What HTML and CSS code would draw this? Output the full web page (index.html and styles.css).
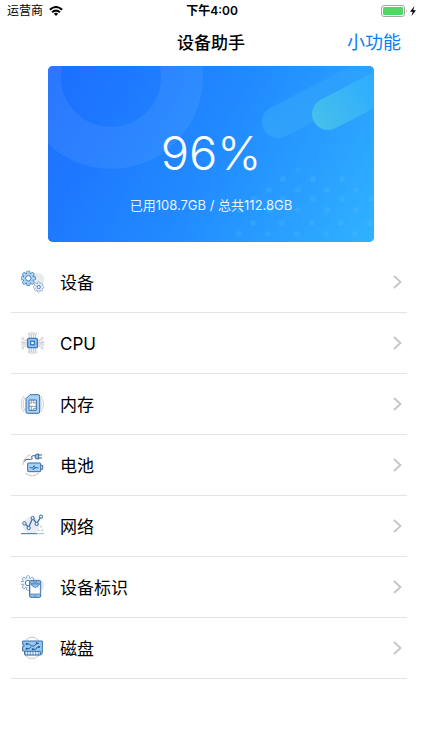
FILE: index.html
```html
<!DOCTYPE html>
<html lang="zh-CN">
<head>
<meta charset="utf-8">
<meta name="viewport" content="width=device-width, initial-scale=1">
<title>设备助手</title>
<link rel="stylesheet" href="styles.css">
</head>
<body>
<svg class="defs" aria-hidden="true">
  <defs>
    <g id="teeth">
      <rect x="-4" y="-21" width="8" height="42" rx="2"/>
      <rect x="-4" y="-21" width="8" height="42" rx="2" transform="rotate(45)"/>
      <rect x="-4" y="-21" width="8" height="42" rx="2" transform="rotate(90)"/>
      <rect x="-4" y="-21" width="8" height="42" rx="2" transform="rotate(135)"/>
    </g>
    <g id="gear">
      <use href="#teeth"/>
      <circle r="15"/>
      <use href="#teeth" stroke="none"/>
      <circle r="14" stroke="none"/>
    </g>
    <symbol id="chevron" viewBox="0 0 10 14"><path d="M1 1l6.500 6L1 13" fill="none" stroke="#c4c4c9" stroke-width="1.800"/></symbol>
  </defs>
</svg>

<header class="status">
  <div class="carrier">
    <span>运营商</span>
    <svg class="wifi" viewBox="0 0 14 10" aria-hidden="true">
      <g fill="none" stroke="#000" stroke-width="2"><path d="M.8 3.700Q7-1.700 13.200 3.700"/><path d="M3.100 6.300Q7 2.900 10.900 6.300"/></g>
      <path d="M4.900 7.700Q7 6 9.100 7.700L7 10z"/>
    </svg>
  </div>
  <time class="clock">下午4:00</time>
  <div class="power">
    <svg class="battery" viewBox="0 0 36 12" aria-hidden="true">
      <rect x=".5" y=".5" width="23" height="11" rx="2.500" fill="#fff" stroke="#a5a5a5"/>
      <rect x="2" y="2" width="20" height="8" rx="1" fill="#4cd964"/>
      <path d="M25 4q1.500 2 0 4z" fill="#a5a5a5"/>
      <path d="M33.500 1L29 6.700h2.800L30.500 11 35 5.300h-2.800z"/>
    </svg>
  </div>
</header>

<nav class="navbar">
  <h1 class="title">设备助手</h1>
  <button class="action" type="button">小功能</button>
</nav>

<main>
  <section class="card">
    <svg class="art" viewBox="0 0 326 176" preserveAspectRatio="xMidYMid slice" aria-hidden="true">
      <defs>
        <linearGradient id="bg" x1="0" y1="0" x2="326" y2="176" gradientUnits="userSpaceOnUse"><stop offset="0" stop-color="#1c6dff"/><stop offset=".5" stop-color="#218aff"/><stop offset="1" stop-color="#30b2ff"/></linearGradient>
        <linearGradient id="pill" x1="264" y1="56" x2="326" y2="22" gradientUnits="userSpaceOnUse"><stop offset="0" stop-color="#46c0ea"/><stop offset="1" stop-color="#30adff"/></linearGradient>
        <linearGradient id="pillSoft" x1="214" y1="64" x2="320" y2="8" gradientUnits="userSpaceOnUse"><stop offset="0" stop-color="#43b5f4" stop-opacity=".42"/><stop offset="1" stop-color="#43b5f4" stop-opacity=".12"/></linearGradient>
      </defs>
      <rect width="326" height="176" fill="url(#bg)"/>
      <circle cx="63" cy="11" r="71" fill="none" stroke="#fff" stroke-opacity=".065" stroke-width="42"/>
      <path d="M230 56L370-17" stroke="url(#pillSoft)" stroke-width="32" stroke-linecap="round"/>
      <path d="M280 48L400-14" stroke="url(#pill)" stroke-width="32" stroke-linecap="round"/>
      <g fill="none" stroke="#65c4ff" stroke-opacity=".2" stroke-width="6" stroke-linecap="round">
        <path d="M250 104h0" stroke-opacity=".1"/>
        <path d="M235 113h0M265 113h0M294 113h0"/>
        <path d="M221 124h0M250 124h0M279 124h0M308 124h0"/>
        <path d="M206 133h0M235 133h0M265 133h0M294 133h0M323 133h0"/>
        <path d="M192 144h0M221 144h0M250 144h0M279 144h0M308 144h0"/>
        <path d="M205 157h0M234 157h0M264 157h0M293 157h0M322 157h0"/>
        <path d="M191 168h0M220 168h0M249 168h0M278 168h0M307 168h0"/>
      </g>
    </svg>
    <p class="percent">96%</p>
    <p class="usage">已用108.7GB / 总共112.8GB</p>
  </section>

  <ul class="menu">
    <li><a class="row" href="#device">
      <svg class="icon" viewBox="0 0 72 72" aria-hidden="true">
        <circle cx="49" cy="28" r="20" fill="#e8ebee"/>
        <g fill="#a9d4f8" stroke="#4a7bb0" stroke-width="4"><use href="#gear" transform="translate(22 25)"/></g>
        <circle cx="22" cy="25" r="8" fill="#fff" stroke="#4a7bb0" stroke-width="3"/>
        <g fill="#e4f1fc" stroke="#4a7bb0" stroke-width="4"><use href="#gear" transform="translate(53 51) scale(.7)"/></g>
        <circle cx="53" cy="51" r="5" fill="#fff" stroke="#4a7bb0" stroke-width="3"/>
      </svg>
      <span class="label">设备</span><svg class="chevron" aria-hidden="true"><use href="#chevron"/></svg></a></li>
    <li><a class="row" href="#cpu">
      <svg class="icon" viewBox="0 0 72 72" aria-hidden="true">
        <g fill="none" stroke="#bfc1c6" stroke-width="3">
          <path d="M25 21V9M31 21V8M37 21V8M43 21V9M25 51v12M31 51v13M37 51v13M43 51v12M19 28h-8l-6-5M19 34H3M19 39H3M19 45h-8l-6 5M49 28h8l6-5M49 34h16M49 39h16M49 45h8l6 5"/>
          <g fill="#fff" stroke-width="2"><circle cx="24" cy="9" r="3"/><circle cx="31" cy="7" r="3"/><circle cx="38" cy="7" r="3"/><circle cx="45" cy="9" r="3"/><circle cx="24" cy="63" r="3"/><circle cx="31" cy="65" r="3"/><circle cx="38" cy="65" r="3"/><circle cx="45" cy="63" r="3"/><circle cx="5" cy="22" r="3"/><circle cx="4" cy="33" r="3"/><circle cx="4" cy="41" r="3"/><circle cx="5" cy="51" r="3"/><circle cx="64" cy="22" r="3"/><circle cx="66" cy="33" r="3"/><circle cx="66" cy="41" r="3"/><circle cx="64" cy="51" r="3"/></g>
        </g>
        <rect x="20" y="22" width="29" height="28" rx="3" fill="#8fc5f2" stroke="#3f7cc0" stroke-width="4"/>
        <rect x="29" y="31" width="11" height="10" fill="#fff" stroke="#3f7cc0" stroke-width="4"/>
      </svg>
      <span class="label">CPU</span><svg class="chevron" aria-hidden="true"><use href="#chevron"/></svg></a></li>
    <li><a class="row" href="#memory">
      <svg class="icon" viewBox="0 0 72 72" aria-hidden="true">
        <path d="M8 12Q-7 36 8 60M12 16Q0 36 12 56M60 12q15 24 0 48M55 16q12 20 0 40" fill="none" stroke="#cdd1d6" stroke-width="3"/>
        <path d="M27 8h25q4 0 4 4v48q0 4-4 4H19q-4 0-4-4V20z" fill="#a7d2f6" stroke="#3c6ea6" stroke-width="3"/>
        <path d="M24 24h22v31H24z" fill="#fff" stroke="#3c6ea6" stroke-width="3"/>
        <path d="M24 33h8v-9M38 24v9h8M24 43h22M31 55V43M38 55v-6h8" fill="none" stroke="#3c6ea6" stroke-width="2"/>
      </svg>
      <span class="label">内存</span><svg class="chevron" aria-hidden="true"><use href="#chevron"/></svg></a></li>
    <li><a class="row" href="#battery">
      <svg class="icon" viewBox="0 0 72 72" aria-hidden="true">
        <path d="M5 36Q9 11 28 5M13 60q21 17 41 0" fill="none" stroke="#bfc4ca" stroke-width="3"/>
        <path d="M11 26q0-7 7-7h11q9 0 3-6-2-5 6-5h7" fill="none" stroke="#365f8e" stroke-width="3"/>
        <path d="M53 3h-3q-8 0-8 8t8 7h3z" fill="#8fc5f2" stroke="#365f8e" stroke-width="3"/>
        <path d="M53 6h10M53 15h10" stroke="#365f8e" stroke-width="3"/>
        <rect x="20" y="30" width="39" height="26" rx="2" fill="#a4d1f7" stroke="#3c6ea6" stroke-width="3"/>
        <path d="M60 37h5v12h-5" fill="#a4d1f7" stroke="#3c6ea6" stroke-width="3"/>
        <path d="M26 44h8l6-6v6h12M36 44v6l8-6" fill="none" stroke="#3c6ea6" stroke-width="3"/>
      </svg>
      <span class="label">电池</span><svg class="chevron" aria-hidden="true"><use href="#chevron"/></svg></a></li>
    <li><a class="row" href="#network">
      <svg class="icon" viewBox="0 0 72 72" aria-hidden="true">
        <circle cx="31" cy="34" r="25" fill="#e9edf1"/>
        <path d="M10 28l13 12L35 12l12 17L60 8" fill="none" stroke="#3c6ea6" stroke-width="4"/>
        <g fill="#d6edff" stroke="#3c6ea6" stroke-width="3"><circle cx="10" cy="28" r="5"/><circle cx="23" cy="42" r="5"/><circle cx="35" cy="12" r="5"/><circle cx="47" cy="30" r="5"/><circle cx="60" cy="8" r="5"/></g>
        <path d="M0 59h50" stroke="#3c6ea6" stroke-width="3"/><path d="M52 59h17" stroke="#9bb7d5" stroke-width="3"/>
        <path d="M50 49h6M53 46v6M61 49h6M64 46v6M57 38h6M60 35v6" stroke="#b9bdc4" stroke-width="2"/>
      </svg>
      <span class="label">网络</span><svg class="chevron" aria-hidden="true"><use href="#chevron"/></svg></a></li>
    <li><a class="row" href="#identifier">
      <svg class="icon" viewBox="0 0 72 72" aria-hidden="true">
        <circle cx="49" cy="31" r="21" fill="#e8ebee"/>
        <g fill="#e4f1fc" stroke="#557fab" stroke-width="3"><use href="#gear" transform="translate(21 24)"/></g>
        <circle cx="21" cy="24" r="8" fill="#fff" stroke="#557fab" stroke-width="3"/>
        <rect x="26" y="17" width="33" height="50" rx="4" fill="#8fc5f2" stroke="#3c6ea6" stroke-width="3"/>
        <path d="M27 25h31v32H27z" fill="#fff" stroke="#3c6ea6" stroke-width="2"/>
        <path d="M30 27v3l5 1 1 5 4-1 3 4 3-4 4 1 1-5 4-1v-3z" fill="#8fc5f2" stroke="#3c6ea6" stroke-width="2"/>
        <path d="M37 21h11M40 62h6" stroke="#3c6ea6" stroke-width="2"/>
      </svg>
      <span class="label">设备标识</span><svg class="chevron" aria-hidden="true"><use href="#chevron"/></svg></a></li>
    <li><a class="row" href="#disk">
      <svg class="icon" viewBox="0 0 72 72" aria-hidden="true">
        <path d="M14 13Q32-7 53 13M13 58q20 20 41 0" fill="none" stroke="#c3c6cb" stroke-width="3"/>
        <path d="M7 15h57v35q0 6-6 6H11V45H5V31h4v-5H5V15z" fill="#92c9f7" stroke="#3c6ea6" stroke-width="3"/>
        <path d="M17 24h8l6 6h8l8-8h7M17 38h8l5-6M36 40h8l5-7h6" fill="none" stroke="#35608f" stroke-width="3"/>
        <g fill="#28527f"><circle cx="17" cy="24" r="3"/><circle cx="17" cy="38" r="3"/><circle cx="35" cy="40" r="3"/><circle cx="47" cy="22" r="3"/><circle cx="54" cy="33" r="3"/></g>
        <path d="M12 46h46v11H12z" fill="#e4f1fc" stroke="#3c6ea6" stroke-width="3"/>
        <path d="M20 46v11M28 46v11M36 46v11M44 46v11M52 46v11" stroke="#3c6ea6" stroke-width="2"/>
      </svg>
      <span class="label">磁盘</span><svg class="chevron" aria-hidden="true"><use href="#chevron"/></svg></a></li>
  </ul>
</main>
</body>
</html>
```
FILE: styles.css
```css
* {
  box-sizing: border-box;
}

body {
  margin: 0;
  background: #fff;
  color: #000;
  font-family: Inter, "Noto Sans CJK SC", sans-serif;
}

.defs {
  position: absolute;
  width: 0;
  height: 0;
}

.status,
.navbar {
  display: grid;
  grid-template-columns: 1fr auto 1fr;
  align-items: center;
}

.status {
  height: 22px;
  padding: 0 5px 0 7px;
  font-size: 12px;
  line-height: 22px;
}

.carrier {
  display: flex;
  align-items: center;
  gap: 6px;
}

.wifi {
  width: 14px;
  height: 10px;
}

.clock {
  font-weight: 600;
}

.power {
  display: flex;
  justify-content: flex-end;
}

.battery {
  width: 36px;
  height: 12px;
}

.navbar {
  height: 44px;
  padding: 0 21px 2px;
}

.title {
  grid-column: 2;
  margin: 0;
  font-size: 17px;
  font-weight: 500;
  line-height: 24px;
}

.action {
  justify-self: end;
  padding: 0;
  border: 0;
  background: none;
  color: #0a7cf5;
  font: inherit;
  font-size: 18px;
  line-height: 24px;
}

.card {
  position: relative;
  display: flex;
  flex-direction: column;
  align-items: center;
  gap: 11px;
  min-height: 176px;
  margin: 0 48px 10px;
  padding-top: 56px;
  overflow: hidden;
  border-radius: 5px;
  background: #218aff;
  color: #fff;
}

.art {
  position: absolute;
  inset: 0;
  width: 100%;
  height: 100%;
}

.percent,
.usage {
  position: relative;
  margin: 0;
}

.percent {
  font-size: 47px;
  font-weight: 300;
  line-height: 62px;
}

.usage {
  font-size: 13px;
  line-height: 20px;
  opacity: 0.9;
}

.menu {
  margin: 0;
  padding: 0 15px 0 11px;
  list-style: none;
}

.menu li {
  border-bottom: 1px solid #e4e4e6;
}

.row {
  display: flex;
  align-items: center;
  height: 60px;
  padding: 0 4px 0 10px;
  color: inherit;
  text-decoration: none;
}

.icon {
  width: 24px;
  height: 24px;
}

.label {
  flex: 1;
  padding: 2px 0 0 15px;
  font-size: 17px;
  line-height: 24px;
}

.chevron {
  width: 10px;
  height: 14px;
}
```
